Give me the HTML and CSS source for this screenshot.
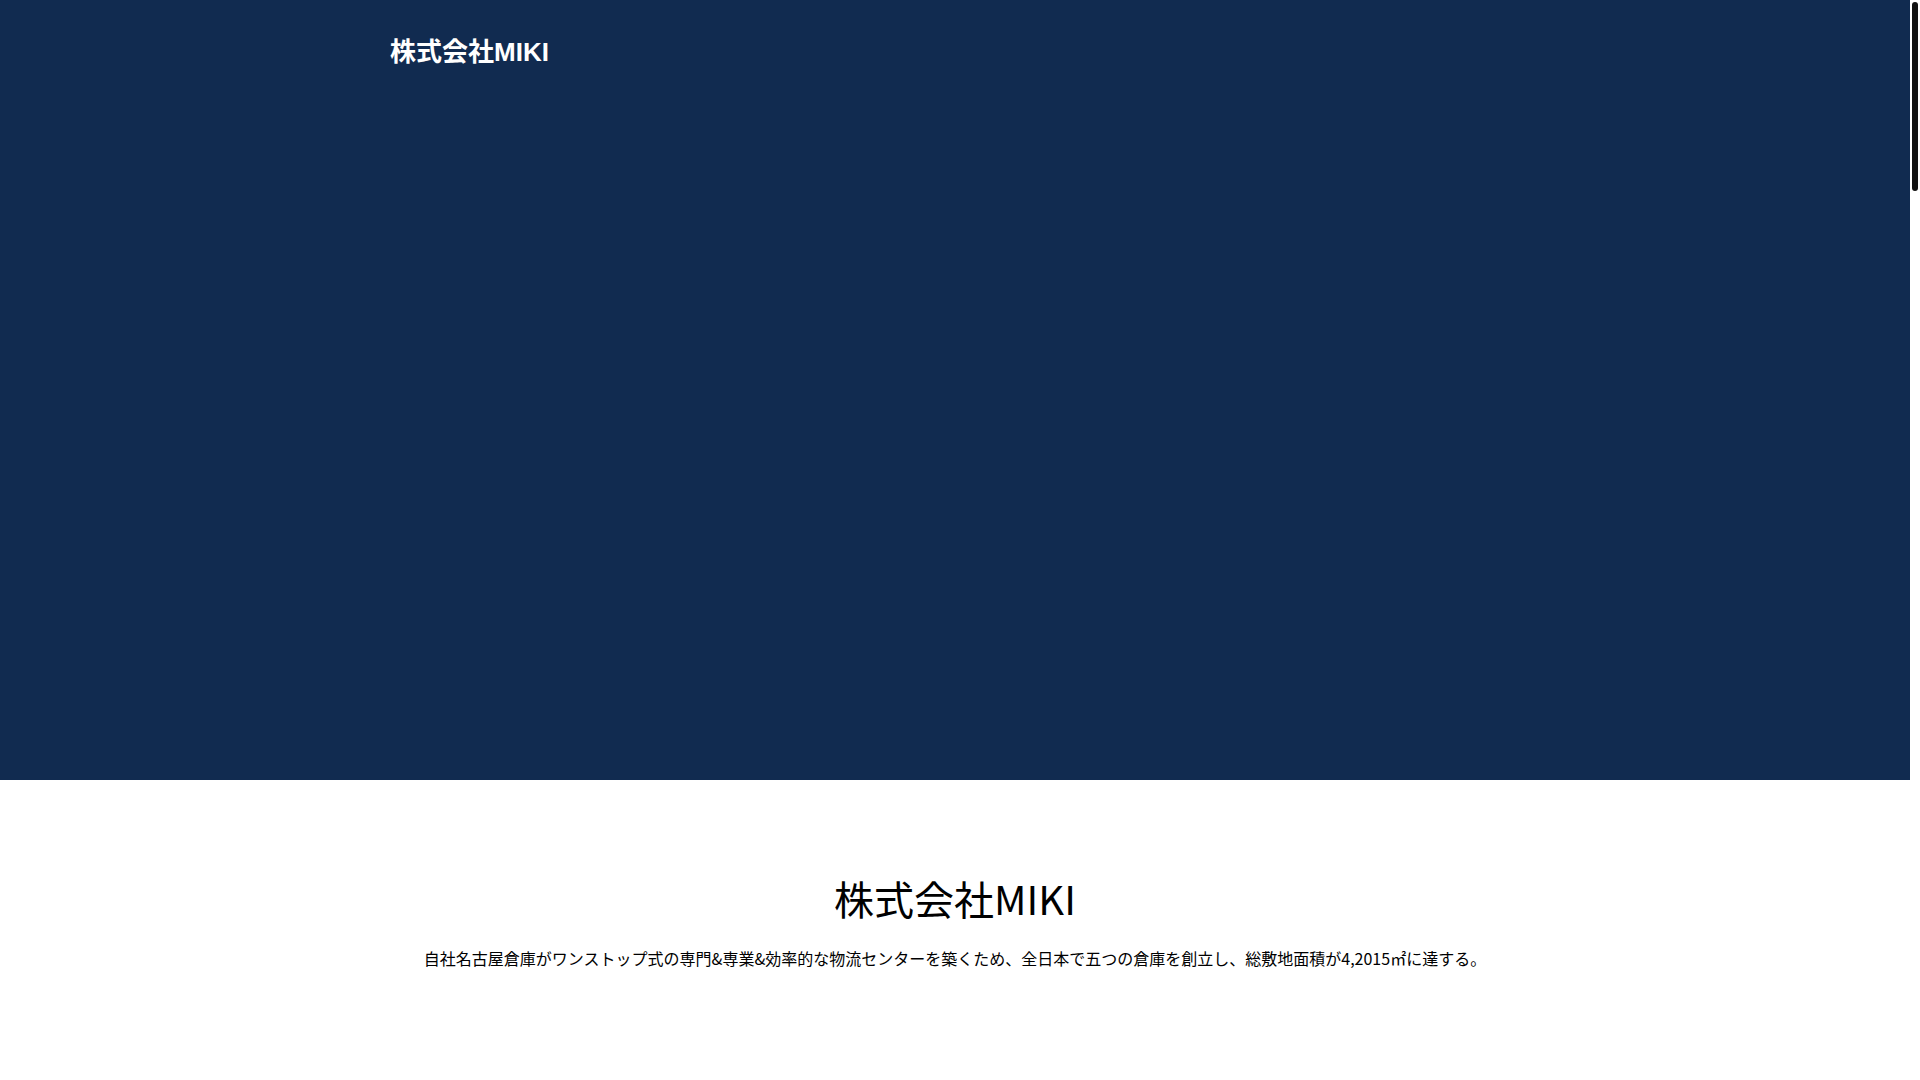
FILE: index.html
```html
<!DOCTYPE html>
<html lang="ja">
<head>
<meta charset="utf-8">
<title>株式会社MIKI</title>
<link rel="stylesheet" href="styles.css">
</head>
<body>
<div class="page">
  <header class="hero">
    <div class="container">
      <div class="brand">株式会社MIKI</div>
    </div>
  </header>
  <main class="about">
    <h1 class="about-title">株式会社MIKI</h1>
    <p class="about-text">自社名古屋倉庫がワンストップ式の専門&amp;専業&amp;効率的な物流センターを築くため、全日本で五つの倉庫を創立し、総敷地面積が4,2015㎡に達する。</p>
  </main>
</div>
<div class="scrollbar"><div class="scrollbar-thumb"></div></div>
</body>
</html>
```

FILE: styles.css
```css
html, body {
  margin: 0;
  padding: 0;
}
body {
  font-family: "Noto Sans CJK JP", "Noto Sans", sans-serif;
  color: #000;
  background: #fff;
  overflow: hidden;
}
.page {
  margin-right: 10px;
}
.hero {
  background: #112b50;
  height: 780px;
  box-sizing: border-box;
  padding-top: 33px;
}
.container {
  width: 1130px;
  margin: 0 auto;
}
.brand {
  font-family: "Liberation Sans", "Noto Sans CJK JP", sans-serif;
  font-weight: bold;
  font-size: 26px;
  line-height: 38px;
  color: #ffffff;
}
.about {
  padding-top: 88px;
  text-align: center;
}
.about-title {
  margin: 0;
  font-weight: normal;
  font-size: 40px;
  line-height: 60px;
}
.about-text {
  margin: 18px 0 0;
  font-size: 16px;
  line-height: 24px;
}
.scrollbar {
  position: fixed;
  top: 0;
  right: 0;
  bottom: 0;
  width: 10px;
  background: #ffffff;
}
.scrollbar-thumb {
  position: absolute;
  top: 2px;
  left: 2px;
  width: 6px;
  height: 189px;
  border-radius: 3px;
  background: #111111;
}
```
